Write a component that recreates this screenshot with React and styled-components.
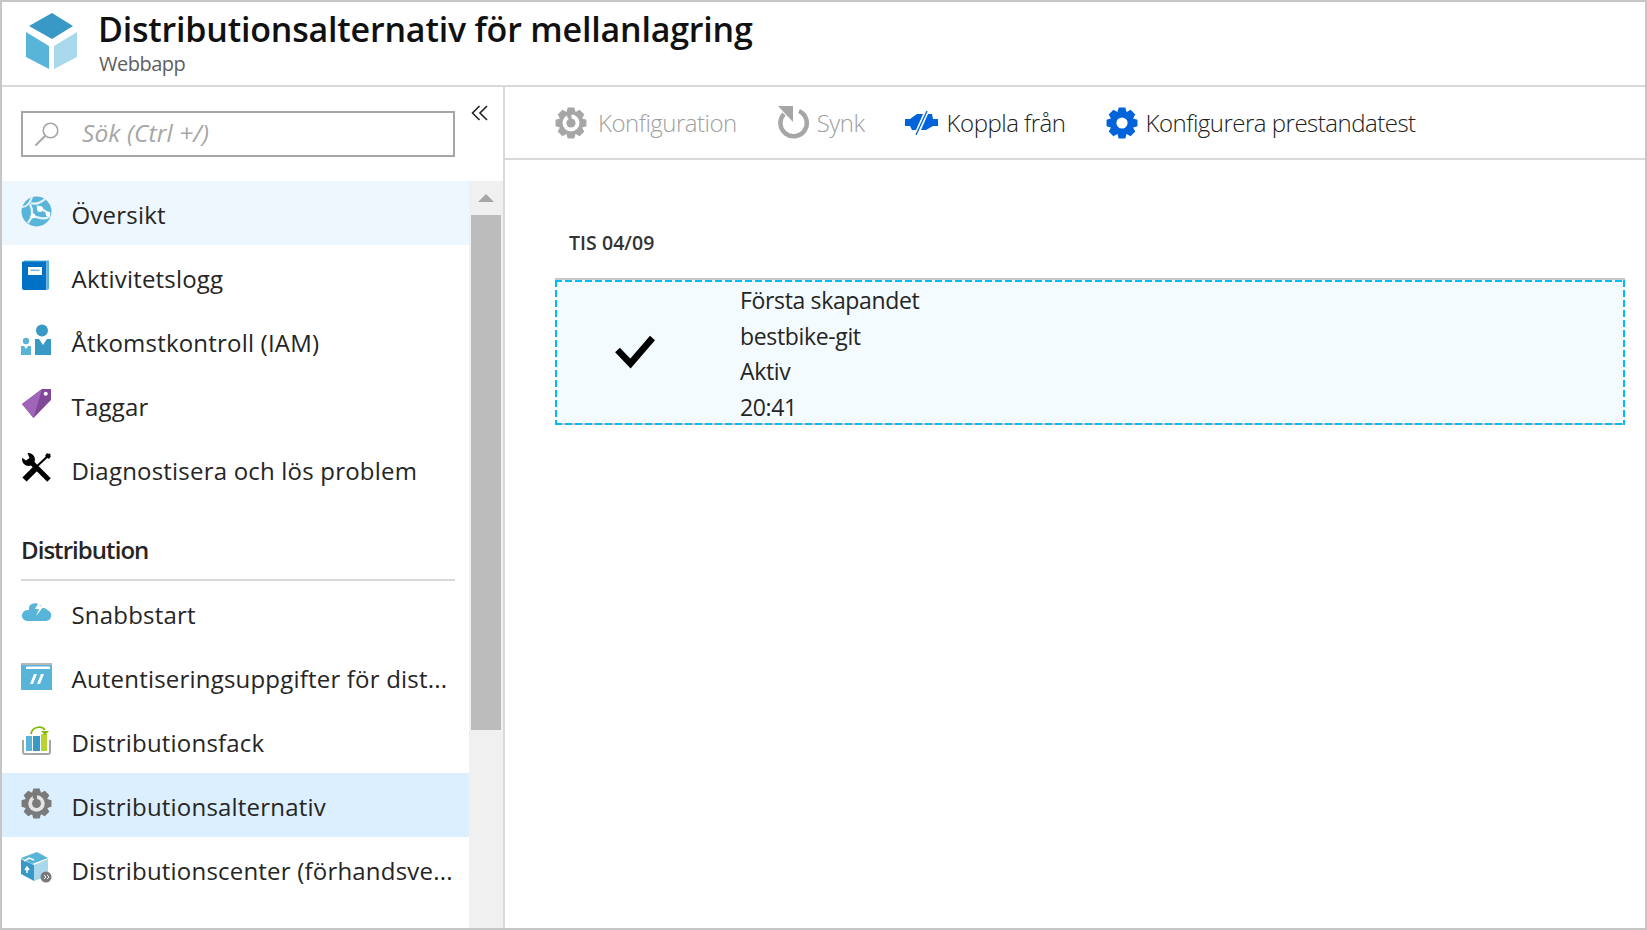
import React from 'react';
import styled, { createGlobalStyle } from 'styled-components';

const Global = createGlobalStyle`
  html, body { margin: 0; padding: 0; background: #fff; }
  body { font-family: "Open Sans", "Noto Sans", sans-serif; color: #252525; }
  * { box-sizing: border-box; }
`;

const Frame = styled.div`
  width: 1647px; height: 930px; border: 2px solid #c6c6c6;
  display: flex; flex-direction: column; overflow: hidden; background: #fff;
`;
const Header = styled.header`
  height: 85px; flex: none; border-bottom: 2px solid #d9d9d9; display: flex; align-items: flex-start;
  padding: 11px 0 0 24px; gap: 21px;
`;
const HeaderText = styled.div`display: flex; flex-direction: column;`;
const Title = styled.h1`
  margin: -4px 0 0; font-size: 34px; line-height: 40px; font-weight: 600; color: #111; letter-spacing: -0.2px; white-space: nowrap;
`;
const Subtitle = styled.div`font-size: 20px; line-height: 28px; color: #5f5f5f; letter-spacing: -0.5px; margin: 1px 0 0 1px;`;
const Body = styled.div`flex: 1; display: flex; min-height: 0;`;
const Sidebar = styled.aside`
  width: 503px; flex: none; border-right: 2px solid #d9d9d9; display: flex; flex-direction: column;
`;
const SearchRow = styled.div`height: 94px; flex: none; display: flex; padding: 24px 0 0 19px; gap: 16px;`;
const SearchBox = styled.div`
  width: 434px; height: 46px; border: 2px solid #a6a6a6; display: flex; align-items: center; padding-left: 11px; gap: 22px;
`;
const SearchHint = styled.span`font-size: 24.5px; font-style: italic; color: #a6a6a6; letter-spacing: 0.1px; padding-bottom: 4px;`;
const Collapse = styled.button`
  border: 0; background: none; padding: 0; width: 18px; height: 18px; margin-top: -7px; display: flex;
`;
const SideBody = styled.div`flex: 1; display: flex; min-height: 0;`;
const Nav = styled.nav`flex: 1; min-width: 0;`;
const NavItem = styled.div`
  height: 64px; display: flex; align-items: center; padding-left: 19px; gap: 19.5px;
  background: ${p => p.$bg || 'transparent'};
`;
const NavIcon = styled.span`width: 31px; height: 31px; flex: none; display: flex; position: relative; top: -2px;`;
const NavLabel = styled.span`font-size: 24px; letter-spacing: 0.2px; white-space: nowrap; color: #252525; position: relative; top: 1px;`;
const Section = styled.div`
  margin: 25px 14px 0 19px; height: 55px; border-bottom: 2px solid #d9d9d9;
  font-size: 24px; font-weight: 600; letter-spacing: -0.95px; color: #252525; line-height: 48px;
`;
const Track = styled.div`
  width: 34px; flex: none; background: #f0f0f0; padding: 0 2px; display: flex; flex-direction: column;
`;
const ArrowUp = styled.div`
  height: 34px; flex: none; display: flex; align-items: center; justify-content: center;
  &::before { content: ''; border: 8px solid transparent; border-top: 0; border-bottom: 8px solid #a6a6a6; }
`;
const Thumb = styled.div`height: 515px; background: #bcbcbc; flex: none;`;
const Main = styled.main`flex: 1; display: flex; flex-direction: column; min-width: 0;`;
const Toolbar = styled.div`
  height: 73px; flex: none; border-bottom: 2px solid #d9d9d9; display: flex; align-items: center; padding: 0 0 0 50px;
`;
const Tool = styled.div`
  display: flex; align-items: center; gap: ${p => p.$gap}px; margin-right: ${p => p.$mr}px;
  font-size: 24px; font-weight: 300; letter-spacing: -0.5px; color: ${p => (p.$off ? '#a0a0a0' : '#202020')}; white-space: nowrap;
`;
const Content = styled.div`flex: 1; padding: 70px 20px 0 50px;`;
const DateLabel = styled.div`
  font-size: 19.5px; line-height: 26px; font-weight: 600; color: #333; padding-left: 14px; letter-spacing: 0.05px;
`;
const dash = dir => `linear-gradient(${dir}, #00bcf5 70%, transparent 70%)`;
const Record = styled.div`
  margin-top: 22px; height: 147px; background: #f4fbfe; border-top: 2px solid #c8c8c8; border-bottom: 2px solid #c8c8c8;
  display: flex; position: relative;
  &::after {
    content: ''; position: absolute; inset: 0 0 -2px 0; pointer-events: none;
    background-image: ${dash('90deg')}, ${dash('90deg')}, ${dash('180deg')}, ${dash('180deg')};
    background-size: 10px 2px, 10px 2px, 2px 10px, 2px 10px;
    background-repeat: repeat-x, repeat-x, repeat-y, repeat-y;
    background-position: 0 0, 0 100%, 0 0, 100% 0;
  }
`;
const Check = styled.div`width: 185px; flex: none; display: flex; align-items: center; justify-content: center; padding-right: 25px;`;
const Lines = styled.div`display: flex; flex-direction: column; padding-top: 3px;`;
const Line = styled.div`font-size: 23px; line-height: 35.5px; letter-spacing: -0.35px; color: #252525;`;

const Cube = () => (
  <svg width="51" height="56" viewBox="0 0 51 56">
    <path d="M26 0 L47 13 L26 26 L3 13Z" fill="#3999c6" />
    <path d="M0 19 L23 33 V56 L0 44Z" fill="#59b4d9" />
    <path d="M28 33 L51 19 V44 L28 56Z" fill="#a9d8ec" />
  </svg>
);
const Glass = () => (
  <svg width="26" height="26" viewBox="0 0 26 26" fill="none" stroke="#a6a6a6" strokeWidth="1.6">
    <circle cx="16.5" cy="9.5" r="7.3" /><path d="M11 15 L1.5 24.5" strokeWidth="2" />
  </svg>
);
const Chevrons = () => (
  <svg width="18" height="18" viewBox="0 0 18 18" fill="none" stroke="#222" strokeWidth="1.6">
    <path d="M8.5 2 L1.5 9 L8.5 16" /><path d="M16 2 L9 9 L16 16" />
  </svg>
);
const GlobeIcon = () => (
  <svg width="31" height="31" viewBox="0 0 31 31">
    <circle cx="15.5" cy="15.5" r="15" fill="#59b4d9" />
    <g fill="none" stroke="#e4f2f9" strokeWidth="2.2">
      <path d="M1 11 C6 11 9 7 11 1" /><path d="M10 7 C15 9 21 6 24 3" /><path d="M9 8 C12 14 12 21 7 27" />
      <path d="M11 20 C17 21 24 25 29 20" /><path d="M16 10 L27 17" />
    </g>
    <circle cx="19" cy="13" r="3" fill="#fff" /><circle cx="27" cy="18" r="2.4" fill="#fff" /><circle cx="12" cy="20" r="2.4" fill="#fff" />
  </svg>
);
const BookIcon = () => (
  <svg width="31" height="31" viewBox="0 0 31 31">
    <path d="M3 0.5 H28 V29 L26 30 V2 H3Z" fill="#59b4d9" />
    <path d="M1 1.5 H25.5 V30 H3 Q1 30 1 28Z" fill="#0072c6" />
    <rect x="7" y="7" width="14" height="8" fill="#fff" /><rect x="9.5" y="9.5" width="9" height="1.6" fill="#7db8e4" />
  </svg>
);
const PeopleIcon = () => (
  <svg width="31" height="31" viewBox="0 0 31 31">
    <circle cx="21" cy="6.5" r="6" fill="#3999c6" />
    <circle cx="5" cy="17" r="3.2" fill="#59b4d9" />
    <path d="M14 15 H18 L22 21 L26 15 H30 V31 H14Z" fill="#3999c6" />
    <path d="M0 22 H3 L5 25 L7 22 H10 V31 H0Z" fill="#59b4d9" />
  </svg>
);
const TagIcon = () => (
  <svg width="31" height="31" viewBox="0 0 31 31">
    <path d="M1 16 L21 1 H30 V12 L12.5 30Z" fill="#804998" />
    <path d="M1 16 L21 1 L12.5 30Z" fill="#a064b8" />
    <circle cx="24.7" cy="5.8" r="2" fill="#fff" />
  </svg>
);
const ToolsIcon = () => (
  <svg width="31" height="31" viewBox="0 0 31 31">
    <path d="M8 8 L28 28" stroke="#000" strokeWidth="5" />
    <circle cx="7.5" cy="7.5" r="6.5" fill="#000" />
    <path d="M1 0 L6 0 L8.5 6 L5 8.5 L0 5Z" fill="#fff" />
    <path d="M29 2 L12 18" stroke="#000" strokeWidth="2" />
    <path d="M14 17 L3.5 27.5" stroke="#000" strokeWidth="6" />
    <path d="M26 1 L30 4 L28 7 L24 4Z" fill="#000" />
  </svg>
);
const CloudIcon = () => (
  <svg width="31" height="31" viewBox="0 0 31 31">
    <path d="M6 25 H25 A5.5 5.5 0 0 0 27 14.5 A5 5 0 0 0 22 12 A9 9 0 0 0 9 9 A7 7 0 0 0 8 14 A6 6 0 0 0 1 21 A6 6 0 0 0 6 25Z" fill="#59b4d9" />
    <path d="M19 4 L14 13 H18 L15 20 L23 10 H19 L22 4Z" fill="#fff" />
  </svg>
);
const CredIcon = () => (
  <svg width="31" height="31" viewBox="0 0 31 31">
    <rect x="0" y="3" width="31" height="27" fill="#59b4d9" />
    <rect x="0" y="3" width="31" height="2" fill="#b8b8b8" />
    <rect x="5" y="6.5" width="24" height="2.5" fill="#fff" />
    <path d="M13 14 H16 L12 24 H9Z M20 14 H23 L19 24 H16Z" fill="#fff" />
  </svg>
);
const SlotsIcon = () => (
  <svg width="31" height="31" viewBox="0 0 31 31">
    <path d="M2 16 V28 Q2 30 4 30 H27 Q29 30 29 28 V16" fill="none" stroke="#a6a6a6" strokeWidth="2" />
    <rect x="5" y="12" width="6" height="15" fill="#59b4d9" /><rect x="12" y="12" width="7" height="15" fill="#3999c6" />
    <rect x="20" y="10" width="6" height="17" fill="#b8d432" />
    <path d="M10 10 C11 3 20 1 24 6" fill="none" stroke="#7fba00" strokeWidth="1.8" />
    <path d="M20 7 H28 L24 11Z" fill="#7fba00" />
  </svg>
);
const buildGear = () => {
  const pts = [];
  const teeth = 8;
  for (let i = 0; i < teeth; i++) {
    const a = (i * 2 * Math.PI) / teeth - Math.PI / 2;
    const w = 0.26;
    [[12, -w - 0.13], [15.8, -w + 0.05], [15.8, w - 0.05], [12, w + 0.13]].forEach(([r, d]) => {
      pts.push(`${(16 + r * Math.cos(a + d)).toFixed(2)} ${(16 + r * Math.sin(a + d)).toFixed(2)}`);
    });
  }
  return `M${pts.join(' L')}Z`;
};
const gearPath = buildGear();
const ConfigGear = ({ fill, size = 32, arc = '#fff' }) => (
  <svg width={size} height={size} viewBox="0 0 32 32">
    <path d={gearPath} fill={fill} />
    <circle cx="16" cy="16" r="8.5" fill={arc} />
    <circle cx="16" cy="16" r="4.6" fill={fill} />
    <path d="M13 6 H16.5 V15 L12 10Z" fill={fill} />
  </svg>
);
const PlainGear = ({ fill }) => (
  <svg width="32" height="32" viewBox="0 0 32 32">
    <path d={gearPath} fill={fill} /><circle cx="16" cy="16" r="5.6" fill="#fff" />
  </svg>
);
const Crate = () => (
  <svg width="31" height="31" viewBox="0 0 31 31">
    <path d="M0 6 L16 0 L27 6 L11 12Z" fill="#59b4d9" />
    <path d="M0 7 L13 13 V29 L0 22Z" fill="#3999c6" />
    <path d="M13 13 L27 7 V24 L13 29Z" fill="#a9d8ec" />
    <path d="M3 9 L8 6 L13 8 M6 16 V21 M4 18 L6 15 L8 18" fill="none" stroke="#fff" strokeWidth="1.5" />
    <circle cx="25" cy="25" r="5.5" fill="#7a7a7a" />
    <path d="M23 23 L25 25 L23 27 M26 23 L28 25 L26 27" fill="none" stroke="#fff" strokeWidth="0.9" />
  </svg>
);
const SyncIcon = () => (
  <svg width="32" height="33" viewBox="0 0 32 33">
    <path d="M21 5 A13.2 13.2 0 1 1 6 8" fill="none" stroke="#a6a6a6" strokeWidth="4.5" />
    <path d="M0 0 H15 V16Z" fill="#a6a6a6" />
  </svg>
);
const Plug = () => (
  <svg width="33" height="24" viewBox="0 0 33 24">
    <path d="M0 8 H5 L12 3 H18 L11 19 H7 L5 15 H0Z" fill="#0063d9" />
    <path d="M33 8 H28 L27 3 H23 L16 19 H21 L28 15 H33Z" fill="#0063d9" />
    <path d="M22 0 L11 24" stroke="#0063d9" strokeWidth="1.3" />
  </svg>
);
const CheckMark = () => (
  <svg width="40" height="34" viewBox="0 0 40 34">
    <path d="M2.5 15 L15.5 28.5 L37.5 3" fill="none" stroke="#000" strokeWidth="6.6" />
  </svg>
);

const top = [
  ['Översikt', <GlobeIcon />, '#eef6fe'],
  ['Aktivitetslogg', <BookIcon />],
  ['Åtkomstkontroll (IAM)', <PeopleIcon />],
  ['Taggar', <TagIcon />],
  ['Diagnostisera och lös problem', <ToolsIcon />],
];
const dist = [
  ['Snabbstart', <CloudIcon />],
  ['Autentiseringsuppgifter för dist...', <CredIcon />],
  ['Distributionsfack', <SlotsIcon />],
  ['Distributionsalternativ', <ConfigGear fill="#7a7a7a" size={31} arc="#e5e5e5" />, '#dcefff'],
  ['Distributionscenter (förhandsve...', <Crate />],
];
const Item = ({ row }) => (
  <NavItem $bg={row[2]}>
    <NavIcon>{row[1]}</NavIcon>
    <NavLabel>{row[0]}</NavLabel>
  </NavItem>
);

export default function App() {
  return (
    <>
      <Global />
      <Frame>
        <Header>
          <Cube />
          <HeaderText>
            <Title>Distributionsalternativ för mellanlagring</Title>
            <Subtitle>Webbapp</Subtitle>
          </HeaderText>
        </Header>
        <Body>
          <Sidebar>
            <SearchRow>
              <SearchBox><Glass /><SearchHint>Sök (Ctrl +/)</SearchHint></SearchBox>
              <Collapse aria-label="Dölj"><Chevrons /></Collapse>
            </SearchRow>
            <SideBody>
              <Nav>
                {top.map(r => <Item key={r[0]} row={r} />)}
                <Section>Distribution</Section>
                {dist.map(r => <Item key={r[0]} row={r} />)}
              </Nav>
              <Track><ArrowUp /><Thumb /></Track>
            </SideBody>
          </Sidebar>
          <Main>
            <Toolbar>
              <Tool $off $gap={11} $mr={41}><ConfigGear fill="#a6a6a6" />Konfiguration</Tool>
              <Tool $off $gap={7} $mr={40}><SyncIcon />Synk</Tool>
              <Tool $gap={9} $mr={40}><Plug />Koppla från</Tool>
              <Tool $gap={8} $mr={0}><PlainGear fill="#0063d9" />Konfigurera prestandatest</Tool>
            </Toolbar>
            <Content>
              <DateLabel>TIS 04/09</DateLabel>
              <Record>
                <Check><CheckMark /></Check>
                <Lines>
                  <Line>Första skapandet</Line>
                  <Line>bestbike-git</Line>
                  <Line>Aktiv</Line>
                  <Line>20:41</Line>
                </Lines>
              </Record>
            </Content>
          </Main>
        </Body>
      </Frame>
    </>
  );
}
